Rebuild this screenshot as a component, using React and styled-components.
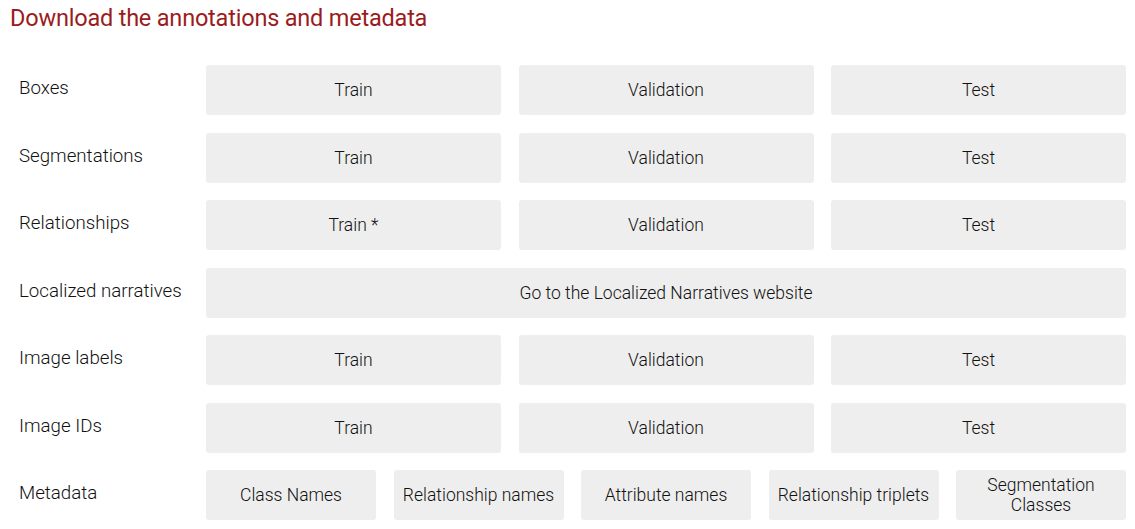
import React from "react";
import styled, { createGlobalStyle } from "styled-components";

const Global = createGlobalStyle`
  html, body { margin: 0; padding: 0; background: #fff; }
  body { font-family: Roboto, "Noto Sans", Arial, sans-serif; color: #212121; }
`;

const Page = styled.div`
  padding: 0 9px 0 10px;
`;

const Heading = styled.h2`
  margin: 0;
  padding-top: 4px;
  font-size: 23.5px;
  line-height: 28px;
  font-weight: 400;
  color: #9b1c20;
  letter-spacing: -0.2px;
`;

const Table = styled.div`
  margin-top: 33px;
  display: grid;
  grid-template-columns: 196px 1fr;
  row-gap: 17.5px;
`;

const Label = styled.div`
  padding-left: 9px;
  font-size: 18.7px;
  line-height: 20px;
  font-weight: 300;
  align-self: center;
  margin-top: -4px;
  color: #111;
`;

const Buttons = styled.div`
  display: grid;
  grid-template-columns: repeat(${(p) => p.$cols}, 1fr);
  column-gap: 17.5px;
`;

const Btn = styled.a`
  display: flex;
  align-items: center;
  justify-content: center;
  text-align: center;
  height: 50px;
  background: #eeeeee;
  border-radius: 3px;
  font-size: 17.5px;
  line-height: 20px;
  font-weight: 300;
  color: #111;
  text-decoration: none;
  cursor: pointer;
`;

const rows = [
  ["Boxes", ["Train", "Validation", "Test"]],
  ["Segmentations", ["Train", "Validation", "Test"]],
  ["Relationships", ["Train *", "Validation", "Test"]],
  ["Localized narratives", ["Go to the Localized Narratives website"]],
  ["Image labels", ["Train", "Validation", "Test"]],
  ["Image IDs", ["Train", "Validation", "Test"]],
  [
    "Metadata",
    [
      "Class Names",
      "Relationship names",
      "Attribute names",
      "Relationship triplets",
      "Segmentation Classes",
    ],
  ],
];

export default function App() {
  return (
    <Page>
      <Global />
      <Heading>Download the annotations and metadata</Heading>
      <Table>
        {rows.map(([label, items]) => (
          <React.Fragment key={label}>
            <Label>{label}</Label>
            <Buttons $cols={items.length}>
              {items.map((t) => (
                <Btn key={t}>
                  {t === "Segmentation Classes" ? (
                    <span>
                      Segmentation
                      <br />
                      Classes
                    </span>
                  ) : (
                    t
                  )}
                </Btn>
              ))}
            </Buttons>
          </React.Fragment>
        ))}
      </Table>
    </Page>
  );
}
